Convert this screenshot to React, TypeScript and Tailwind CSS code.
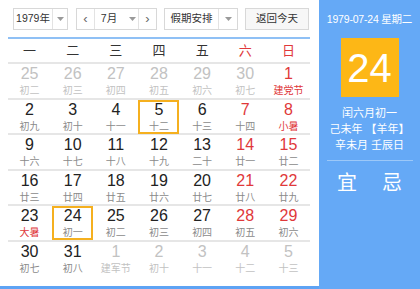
type Day = { n: number; l: string; gray?: boolean; red?: boolean; fest?: boolean; box?: boolean };

const weeks: Day[][] = [
  [
    { n: 25, l: "初二", gray: true },
    { n: 26, l: "初三", gray: true },
    { n: 27, l: "初四", gray: true },
    { n: 28, l: "初五", gray: true },
    { n: 29, l: "初六", gray: true },
    { n: 30, l: "初七", gray: true },
    { n: 1, l: "建党节", red: true, fest: true },
  ],
  [
    { n: 2, l: "初九" },
    { n: 3, l: "初十" },
    { n: 4, l: "十一" },
    { n: 5, l: "十二", box: true },
    { n: 6, l: "十三" },
    { n: 7, l: "十四", red: true },
    { n: 8, l: "小暑", red: true, fest: true },
  ],
  [
    { n: 9, l: "十六" },
    { n: 10, l: "十七" },
    { n: 11, l: "十八" },
    { n: 12, l: "十九" },
    { n: 13, l: "二十" },
    { n: 14, l: "廿一", red: true },
    { n: 15, l: "廿二", red: true },
  ],
  [
    { n: 16, l: "廿三" },
    { n: 17, l: "廿四" },
    { n: 18, l: "廿五" },
    { n: 19, l: "廿六" },
    { n: 20, l: "廿七" },
    { n: 21, l: "廿八", red: true },
    { n: 22, l: "廿九", red: true },
  ],
  [
    { n: 23, l: "大暑", fest: true },
    { n: 24, l: "初一", box: true },
    { n: 25, l: "初二" },
    { n: 26, l: "初三" },
    { n: 27, l: "初四" },
    { n: 28, l: "初五", red: true },
    { n: 29, l: "初六", red: true },
  ],
  [
    { n: 30, l: "初七" },
    { n: 31, l: "初八" },
    { n: 1, l: "建军节", gray: true },
    { n: 2, l: "初十", gray: true },
    { n: 3, l: "十一", gray: true },
    { n: 4, l: "十二", gray: true },
    { n: 5, l: "十三", gray: true },
  ],
];

const weekdays = ["一", "二", "三", "四", "五", "六", "日"];

function Caret() {
  return (
    <svg width="7" height="4" viewBox="0 0 7 4">
      <path d="M0 0h7L3.5 4z" fill="#9a9a9a" />
    </svg>
  );
}

function DayCell({ d }: { d: Day }) {
  const numColor = d.gray ? "text-[#c2c2c2]" : d.red ? "text-[#e0383a]" : "text-[#222]";
  const lunarColor = d.gray ? "text-[#c2c2c2]" : d.fest ? "text-[#e0383a]" : "text-[#8a8a8a]";
  return (
    <div className="flex items-center justify-center">
      <div
        className={`w-[41px] h-[34px] flex flex-col items-center justify-center ${
          d.box ? "border-2 border-[#f5b01f]" : "border-2 border-transparent"
        }`}
      >
        <div className={`text-[16px] leading-[18px] ${numColor}`}>{d.n}</div>
        <div className={`text-[10px] leading-[12px] mt-[2px] whitespace-nowrap ${lunarColor}`}>{d.l}</div>
      </div>
    </div>
  );
}

export default function App() {
  return (
    <div className="flex w-[420px] h-[289px] bg-white font-['Liberation_Sans','Noto_Sans_CJK_SC',sans-serif] overflow-hidden">
      <div className="w-[319px] h-[289px] flex flex-col pl-[8px] pr-[9px] border-b-[3px] border-[#5ea3f4]">
        <div className="flex items-center h-[22px] mt-[8px] text-[10.5px] text-[#333] whitespace-nowrap">
          <div className="ml-[5px] w-[55px] h-[22px] flex border border-[#d8d8d8]">
            <div className="flex-1 flex items-center justify-center">1979年</div>
            <div className="w-[15px] flex items-center justify-center border-l border-[#e3e3e3]">
              <Caret />
            </div>
          </div>
          <div className="ml-[8px] w-[81px] h-[22px] flex border border-[#d8d8d8]">
            <div className="w-[18px] flex items-center justify-center border-r border-[#e3e3e3] text-[#666] text-[13px]">‹</div>
            <div className="flex-1 flex items-center justify-center gap-[12px] pl-[4px]">
              <span>7月</span>
              <Caret />
            </div>
            <div className="w-[18px] flex items-center justify-center border-l border-[#e3e3e3] text-[#666] text-[13px]">›</div>
          </div>
          <div className="ml-[7px] w-[74px] h-[22px] flex border border-[#d8d8d8]">
            <div className="flex-1 flex items-center justify-center">假期安排</div>
            <div className="w-[19px] flex items-center justify-center border-l border-[#e3e3e3]">
              <Caret />
            </div>
          </div>
          <div className="ml-[7px] w-[64px] h-[22px] flex items-center justify-center border border-[#d8d8d8] bg-[#f7f7f7]">
            返回今天
          </div>
        </div>
        <div className="mt-[7px] h-[2px] bg-[#8fc0f5]" />
        <div className="grid grid-cols-7 h-[25px] border-b-2 border-[#e6e6e6] text-[13px]">
          {weekdays.map((w, i) => (
            <div key={w} className={`flex items-center justify-center ${i >= 5 ? "text-[#e0383a]" : "text-[#333]"}`}>
              {w}
            </div>
          ))}
        </div>
        {weeks.map((row, ri) => (
          <div
            key={ri}
            className={`grid grid-cols-7 h-[35.5px] ${ri < 5 ? "border-b-2 border-[#e6e6e6]" : ""}`}
          >
            {row.map((d, di) => (
              <DayCell key={di} d={d} />
            ))}
          </div>
        ))}
      </div>
      <div className="flex-1 h-[289px] bg-[#65a9f6] flex flex-col items-center text-white whitespace-nowrap">
        <div className="mt-[11px] text-[10.5px] leading-[16px] tracking-[-0.2px]">1979-07-24 星期二</div>
        <div className="mt-[11px] w-[58px] h-[59px] bg-[#fdb716] flex items-center justify-center text-[40px] leading-none">
          24
        </div>
        <div className="mt-[8px] text-[11px] leading-[16px] flex flex-col items-center">
          <div>闰六月初一</div>
          <div>己未年 【羊年】</div>
          <div>辛未月 壬辰日</div>
        </div>
        <div className="mt-[7px] w-[86px] h-[1px] bg-[#9cc8f8]" />
        <div className="mt-[10px] flex gap-[25px] text-[20px] leading-[24px]">
          <span>宜</span>
          <span>忌</span>
        </div>
      </div>
    </div>
  );
}
